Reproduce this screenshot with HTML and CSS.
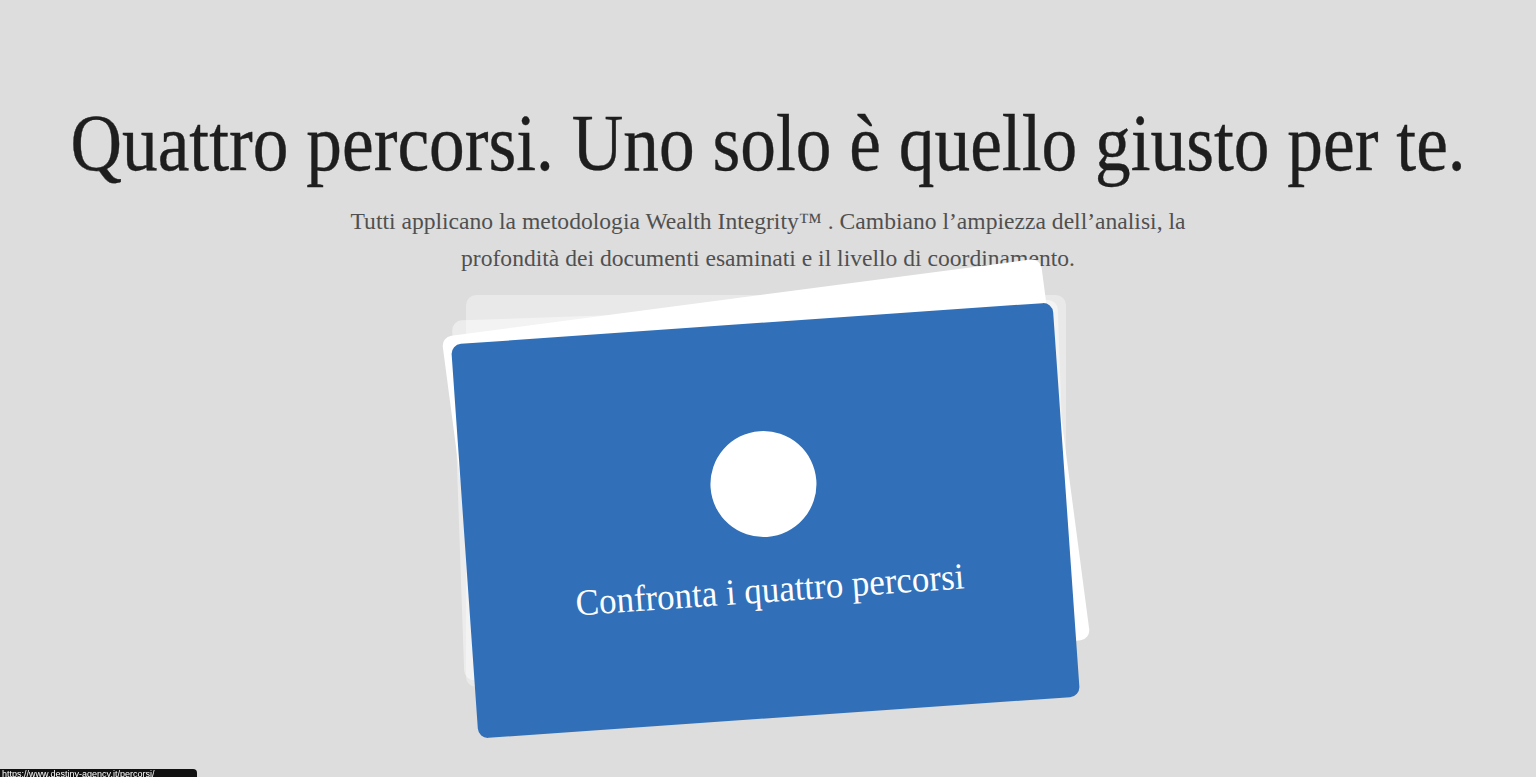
FILE: index.html
```html
<!DOCTYPE html>
<html lang="it">
<head>
<meta charset="utf-8">
<title>Quattro percorsi</title>
<link rel="stylesheet" href="styles.css">
</head>
<body>
<main class="page">
  <section class="intro">
    <h1 class="title"><span class="title-inner">Quattro percorsi. Uno solo è quello giusto per te.</span></h1>
    <p class="lead">Tutti applicano la metodologia Wealth Integrity™ . Cambiano l’ampiezza dell’analisi, la<br>profondità dei documenti esaminati e il livello di coordinamento.</p>
  </section>
  <section class="stack">
    <div class="card card-ghost-a"></div>
    <div class="card card-ghost-b"></div>
    <div class="card card-white"></div>
    <a class="card card-blue" href="#percorsi">
      <span class="dot"></span>
      <span class="card-label">Confronta i quattro percorsi</span>
    </a>
  </section>
</main>
<div class="status">https://www.destiny-agency.it/percorsi/</div>
</body>
</html>
```
FILE: styles.css
```css
html, body {
  margin: 0;
  padding: 0;
}
body {
  background: #dddddd;
  font-family: "Liberation Serif", "Times New Roman", serif;
  color: #222222;
  width: 1536px;
  height: 777px;
  overflow: hidden;
}
.page {
  display: flex;
  flex-direction: column;
  align-items: center;
}
.intro {
  padding-top: 97px;
  text-align: center;
  width: 100%;
}
.title {
  margin: 0;
  font-weight: 400;
  font-size: 80px;
  line-height: 92px;
  color: #1e1e1e;
  white-space: nowrap;
  display: flex;
  justify-content: center;
}
.title-inner {
  flex: none;
  transform: scaleX(0.892);
  transform-origin: center;
  -webkit-text-stroke: 0.4px #1e1e1e;
}
.lead {
  margin: 14px 0 0;
  font-size: 23.6px;
  line-height: 37px;
  color: #505050;
}
.stack {
  position: relative;
  width: 620px;
  height: 470px;
  margin-top: -3px;
}
.card {
  position: absolute;
  border-radius: 10px;
  box-sizing: border-box;
}
.card-ghost-a {
  left: 8px;
  top: 21px;
  width: 600px;
  height: 392px;
  background: rgba(255, 255, 255, 0.35);
}
.card-ghost-b {
  left: 0px;
  top: 36px;
  width: 606px;
  height: 360px;
  background: rgba(255, 255, 255, 0.45);
  transform: rotate(-2deg);
}
.card-white {
  left: 6px;
  top: 22px;
  width: 604px;
  height: 384px;
  background: #ffffff;
  transform: rotate(-7.5deg);
}
.card-blue {
  left: 6px;
  top: 49px;
  width: 603px;
  height: 395px;
  background: #3170b8;
  transform: rotate(-4deg);
  display: flex;
  flex-direction: column;
  align-items: center;
  justify-content: center;
  gap: 32px;
  text-decoration: none;
  color: #ffffff;
}
.dot {
  width: 106px;
  height: 106px;
  border-radius: 50%;
  background: #ffffff;
}
.card-label {
  font-size: 37px;
  line-height: 42px;
  color: #ffffff;
  display: inline-block;
  transform: scaleX(0.945);
}
.status {
  position: fixed;
  left: 0;
  bottom: -4px;
  height: 12px;
  width: 197px;
  padding: 0 2px;
  background: #111111;
  color: #ffffff;
  border-radius: 0 4px 0 0;
  font-family: "Liberation Sans", Arial, sans-serif;
  font-size: 9px;
  line-height: 10px;
  overflow: hidden;
  white-space: nowrap;
  box-sizing: border-box;
}
```
